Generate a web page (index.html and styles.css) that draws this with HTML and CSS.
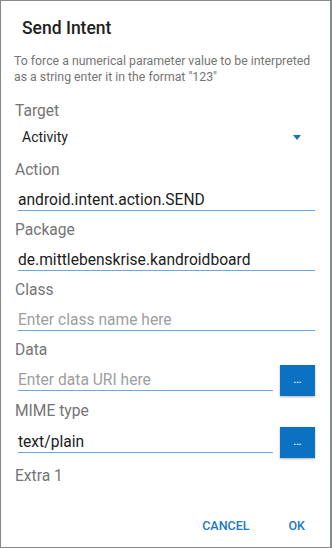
FILE: index.html
```html
<!DOCTYPE html>
<html>
<head>
<meta charset="utf-8">
<link rel="stylesheet" href="styles.css">
</head>
<body>
<div class="dialog">
  <div class="title">Send Intent</div>
  <div class="content">
    <p class="desc">To force a numerical parameter value to be interpreted as a string enter it in the format "123"</p>
    <div class="label label-target">Target</div>
    <div class="spinner">
      <span class="spinner-text">Activity</span>
      <span class="arrow"></span>
    </div>
    <div class="field">
      <div class="label">Action</div>
      <div class="input">android.intent.action.SEND</div>
    </div>
    <div class="field">
      <div class="label">Package</div>
      <div class="input">de.mittlebenskrise.kandroidboard</div>
    </div>
    <div class="field">
      <div class="label">Class</div>
      <div class="input placeholder">Enter class name here</div>
    </div>
    <div class="field">
      <div class="label">Data</div>
      <div class="row">
        <div class="input placeholder">Enter data URI here</div>
        <div class="pick">...</div>
      </div>
    </div>
    <div class="field field-mime">
      <div class="label">MIME type</div>
      <div class="row">
        <div class="input">text/plain</div>
        <div class="pick">...</div>
      </div>
    </div>
    <div class="label label-extra">Extra 1</div>
  </div>
  <div class="actions">
    <span class="action">CANCEL</span>
    <span class="action">OK</span>
  </div>
</div>
</body>
</html>
```
FILE: styles.css
```css
html, body {
  margin: 0;
  padding: 0;
}
body {
  width: 332px;
  height: 548px;
  overflow: hidden;
  background: #86898c;
}
.dialog {
  margin: 1px 2px 1px 1px;
  height: 546px;
  background: #ffffff;
  display: flex;
  flex-direction: column;
  font-family: Roboto, "Noto Sans", sans-serif;
  box-sizing: border-box;
}
.title {
  padding: 15px 0 0 21px;
  font-size: 17.5px;
  line-height: 24px;
  font-weight: 500;
  color: #212121;
}
.content {
  flex: 1;
  overflow: hidden;
  padding: 0 15px 0 13px;
  display: flex;
  flex-direction: column;
}
.desc {
  margin: 13px 0 0 0;
  font-size: 12.3px;
  line-height: 16px;
  color: #757575;
}
.label {
  font-size: 15.6px;
  line-height: 20px;
  color: #757575;
  padding-left: 1px;
}
.label-target {
  margin-top: 16px;
}
.spinner {
  margin-top: 6px;
  display: flex;
  align-items: center;
  justify-content: space-between;
  height: 20px;
  padding: 0 14px 0 8px;
}
.spinner-text {
  font-size: 14px;
  line-height: 20px;
  color: #212121;
}
.arrow {
  width: 0;
  height: 0;
  border-left: 4px solid transparent;
  border-right: 4px solid transparent;
  border-top: 5px solid #1a73c4;
  margin-top: 1px;
}
.field {
  display: flex;
  flex-direction: column;
  gap: 10px;
  margin-top: 13px;
}
.field + .field {
  margin-top: 9px;
}
.field-mime {
  gap: 11px;
}
.field.field-mime {
  margin-top: 10px;
}
.input {
  margin-left: 4px;
  font-size: 15.6px;
  line-height: 20px;
  color: #212121;
  border-bottom: 1px solid #6aa7dc;
  white-space: nowrap;
  flex: 1;
}
.placeholder {
  color: #9e9e9e;
}
.row {
  display: flex;
  align-items: center;
  gap: 7px;
}
.pick {
  width: 35px;
  height: 31px;
  margin: -5px 0;
  background: #0b72c3;
  color: #ffffff;
  font-size: 9px;
  font-weight: 700;
  line-height: 30px;
  text-align: center;
  box-shadow: 0 1px 2px rgba(0, 0, 0, 0.3);
  flex: none;
}
.label-extra {
  margin-top: 13px;
}
.actions {
  display: flex;
  justify-content: flex-end;
  gap: 39px;
  padding: 0 25px 11px 0;
}
.action {
  font-size: 12.5px;
  line-height: 20px;
  font-weight: 500;
  color: #1a78c6;
}
```
